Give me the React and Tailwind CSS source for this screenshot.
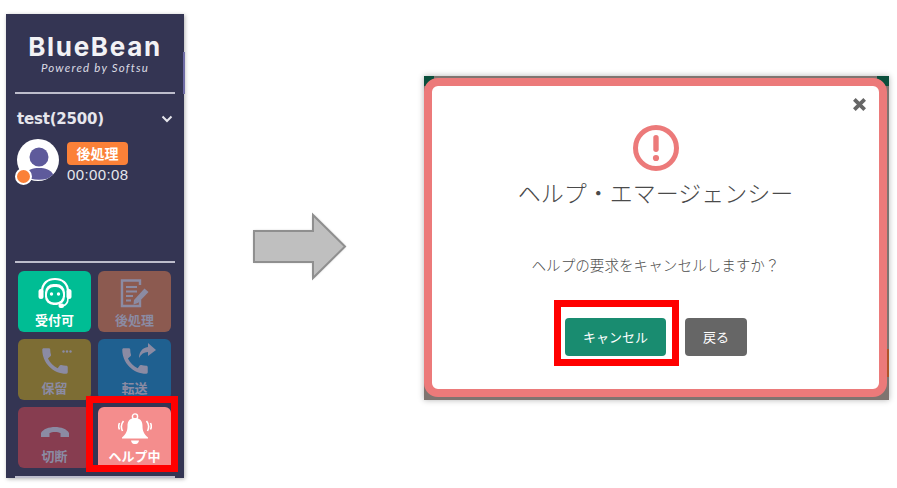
import React from "react";
import { MdCall } from "react-icons/md";

const jp = "font-['Noto_Sans_CJK_JP','Noto_Sans',sans-serif]";

function HeadsetIcon() {
  return (
    <svg width="36" height="32" viewBox="0 0 36 32" fill="none">
      <path d="M5 15 C5 6 11 2 18 2 C25 2 31 6 31 15" stroke="white" strokeWidth="2.2" />
      <rect x="1.5" y="12" width="5" height="10" rx="2.5" fill="white" />
      <rect x="29.5" y="12" width="5" height="10" rx="2.5" fill="white" />
      <rect x="8" y="7" width="20" height="21" rx="8.5" fill="white" />
      <rect x="10" y="10" width="16" height="15.5" rx="7" fill="#00bd94" />
      <circle cx="14.5" cy="17" r="1.7" fill="white" />
      <circle cx="21.5" cy="17" r="1.7" fill="white" />
      <path d="M31 21 C31 26 29 28.5 25 29" stroke="white" strokeWidth="1.6" />
      <rect x="21.5" y="26.5" width="5.5" height="4.5" rx="2" fill="white" />
    </svg>
  );
}

function MemoIcon() {
  return (
    <svg width="30" height="29" viewBox="0 0 30 29" fill="none" stroke="#8b8ba3">
      <path d="M20 6 V1.5 H2 V27 H20 V21" strokeWidth="2.4" />
      <path d="M6 8 H17 M6 12.5 H17 M6 17 H13 M6 21.5 H11" strokeWidth="2" />
      <path d="M14 21 L24.5 9.5 L28.5 13 L18 24 L13.5 25.5 Z" fill="#8b8ba3" stroke="none" />
    </svg>
  );
}

function HangUpIcon() {
  return (
    <svg width="30" height="14" viewBox="0 0 30 14" className="mt-[4px]">
      <path d="M1 9 C5 1 25 1 29 9 V13 H20.5 V9 C18 7.5 12 7.5 9.5 9 V13 H1 Z" fill="#8b8ba3" />
    </svg>
  );
}

function BellIcon() {
  return (
    <svg width="34" height="32" viewBox="0 0 34 32" fill="none">
      <circle cx="17" cy="3.5" r="2.6" stroke="white" strokeWidth="1.4" />
      <path d="M17 5 C23 5 24.5 9 24.5 13 C24.5 18 26 21 30 24.5 V25.5 H4 V24.5 C8 21 9.5 18 9.5 13 C9.5 9 11 5 17 5 Z" fill="white" />
      <path d="M13 27.5 H21 C20.5 30.5 18.5 31 17 31 C15.5 31 13.5 30.5 13 27.5 Z" fill="white" />
      <path d="M5.5 8 C3 11 3 15 4.5 18 M1.5 10 C0.5 12 0.5 14.5 1.5 16.5" stroke="white" strokeWidth="1.6" />
      <path d="M28.5 8 C31 11 31 15 29.5 18 M32.5 10 C33.5 12 33.5 14.5 32.5 16.5" stroke="white" strokeWidth="1.6" />
    </svg>
  );
}

function ActionButton({ bg, label, bright, icon, clipped }) {
  return (
    <div
      className={`${bg} ${clipped ? "rounded-t-[6px]" : "rounded-[6px]"} h-[61px] flex flex-col items-center overflow-hidden`}
    >
      <div className="h-[36px] mt-[4px] mb-[1px] flex items-center justify-center">{icon}</div>
      <span
        className={`${jp} text-[13px] leading-[16px] font-bold ${bright ? "text-white" : "text-[#8b8ba3]"}`}
      >
        {label}
      </span>
    </div>
  );
}

function Sidebar() {
  return (
    <aside className="relative ml-[6px] mt-[14px] w-[178px] h-[464px] bg-[#343553] shadow-[1px_1px_4px_rgba(0,0,0,0.3)] shrink-0">
      <div className="absolute right-[-1px] top-[38px] w-[2px] h-[42px] bg-[#6f6ca6]" />
      <div className="h-[80px] flex flex-col items-center pt-[20px] border-b-2 border-[#bdbdcc] mx-[9px]">
        <span className="font-['Inter',sans-serif] text-[26px] leading-[26px] font-bold tracking-[1.7px] text-[#f2f2f5]">
          BlueBean
        </span>
        <span className="font-['Lato',sans-serif] italic text-[11.5px] leading-[13px] tracking-[1.2px] text-[#dcdce4] mt-[1px]">
          Powered by Softsu
        </span>
      </div>

      <div className="flex items-center justify-between px-[11px] mt-[15px]">
        <span className="font-['DejaVu_Sans',sans-serif] font-bold text-[15px] leading-[20px] text-[#e6e6ec] tracking-[-0.2px]">
          test(2500)
        </span>
        <svg width="12" height="8" viewBox="0 0 12 8" fill="none">
          <path d="M1.5 1.5 L6 6 L10.5 1.5" stroke="#e6e6ec" strokeWidth="2" />
        </svg>
      </div>

      <div className="flex pl-[11px] mt-[10px] h-[122px]">
        <div className="relative w-[42px] h-[42px] rounded-full bg-white overflow-visible">
          <svg width="42" height="42" viewBox="0 0 42 42" className="rounded-full">
            <circle cx="22" cy="18" r="9.5" fill="#5e5a9b" />
            <path d="M7 37 C10 30 16 29 22 29 C28 29 34 30 37 37 C30 42 14 42 7 37 Z" fill="#5e5a9b" />
          </svg>
          <div className="absolute left-[-2px] bottom-[-4px] w-[17px] h-[17px] rounded-full bg-[#fb8138] border-2 border-white" />
        </div>
        <div className="ml-[8px] mt-[3px] flex flex-col">
          <span className={`${jp} w-[61px] h-[23px] rounded-[4px] bg-[#fb8138] text-white text-[14px] leading-[23px] font-bold text-center`}>
            後処理
          </span>
          <span className="font-['Liberation_Sans',sans-serif] text-[15px] leading-[18px] text-[#e6e6ec] mt-[1px] tracking-[0.4px]">
            00:00:08
          </span>
        </div>
      </div>

      <div className="border-t-2 border-[#bdbdcc] mx-[9px] pt-[8px]">
        <div className="grid grid-cols-[73px_73px] gap-[7px] ml-[3px]">
          <ActionButton bg="bg-[#00bd94]" label="受付可" bright icon={<HeadsetIcon />} />
          <ActionButton bg="bg-[#8c5a50]" label="後処理" icon={<MemoIcon />} />
          <ActionButton
            bg="bg-[#7d6d34]"
            label="保留"
            icon={
              <span className="relative text-[#8b8ba3]">
                <MdCall size={34} />
                <svg className="absolute right-[0px] top-[6px]" width="10" height="3" viewBox="0 0 10 3">
                  <circle cx="1.5" cy="1.5" r="1.2" fill="#8b8ba3" />
                  <circle cx="5" cy="1.5" r="1.2" fill="#8b8ba3" />
                  <circle cx="8.5" cy="1.5" r="1.2" fill="#8b8ba3" />
                </svg>
              </span>
            }
          />
          <ActionButton
            bg="bg-[#1f6090]"
            label="転送"
            icon={
              <span className="relative text-[#8b8ba3]">
                <MdCall size={34} />
                <svg className="absolute right-[-4px] top-[-1px]" width="18" height="16" viewBox="0 0 18 16">
                  <path d="M10 0 L18 7 L10 13 V9 C6 9 3 11 1 15 C1 9 4 5 10 4 Z" fill="#8b8ba3" />
                </svg>
              </span>
            }
          />
          <ActionButton bg="bg-[#873d50]" label="切断" icon={<HangUpIcon />} />
          <ActionButton bg="bg-[#f48d8d]" label="ヘルプ中" bright clipped icon={<BellIcon />} />
        </div>
        <div className="border-t-2 border-[#bdbdcc] mt-[8px]" />
      </div>

      {/* red highlight around the help button */}
      <div className="absolute left-[80px] top-[382px] w-[92px] h-[76px] border-[7px] border-[#ff0000]" />
    </aside>
  );
}

function Arrow() {
  return (
    <svg width="100" height="74" viewBox="0 0 100 74" className="ml-[65px] mt-[209px] shrink-0" fill="none">
      <defs>
        <filter id="soft" x="-10%" y="-10%" width="120%" height="120%">
          <feGaussianBlur stdDeviation="1.6" />
        </filter>
      </defs>
      <path d="M5 22 H64 V6 L96 37.5 L64 69 V53 H5 Z" fill="#000" opacity="0.3" filter="url(#soft)" />
      <path d="M5 22 H64 V6 L96 37.5 L64 69 V53 H5 Z" fill="#bfbfbf" stroke="#8f8f8f" strokeWidth="2" />
    </svg>
  );
}

function HelpDialog() {
  return (
    <div className="relative ml-[75px] mt-[76px] w-[465px] h-[324px] pt-[2px] bg-[#7f7470] shadow-[0_0_6px_rgba(0,0,0,0.3)] shrink-0">
      <div className="absolute left-0 top-0 w-[10px] h-[10px] bg-[#0b4f3c]" />
      <div className="absolute right-0 top-0 w-[12px] h-[10px] bg-[#0b4f3c]" />
      <div className="absolute right-0 top-[273px] w-[2px] h-[28px] bg-[#b0552a]" />
      <div className="relative w-[463px] h-[319px] border-[8px] border-[#ec7a7a] rounded-[14px] bg-white flex flex-col items-center">
        <svg className="absolute right-[12px] top-[11px]" width="15" height="15" viewBox="0 0 16 16">
          <path d="M2.5 2.5 L13.5 13.5 M13.5 2.5 L2.5 13.5" stroke="#666666" strokeWidth="4" />
        </svg>

        <svg width="46" height="46" viewBox="0 0 46 46" className="mt-[39px]" fill="none">
          <circle cx="23" cy="23" r="20.5" stroke="#ec7a7a" strokeWidth="5" />
          <rect x="20.3" y="10" width="5.4" height="17" rx="2.7" fill="#ec7a7a" />
          <circle cx="23" cy="33" r="3.1" fill="#ec7a7a" />
        </svg>

        <h2 className={`${jp} font-light text-[23px] leading-[30px] text-[#4a4a4a] mt-[6px] whitespace-nowrap`}>
          ヘルプ・エマージェンシー
        </h2>

        <p className={`${jp} font-light text-[14.6px] leading-[20px] text-[#4d4d4d] mt-[48px] whitespace-nowrap`}>
          ヘルプの要求をキャンセルしますか？
        </p>

        <div className="relative flex items-center gap-[19px] mt-[43px] ml-[1px]">
          <button className={`${jp} w-[101px] h-[38px] rounded-[4px] bg-[#198c70] text-white text-[13px]`}>
            キャンセル
          </button>
          <button className={`${jp} w-[62px] h-[38px] rounded-[4px] bg-[#666666] text-white text-[13px]`}>
            戻る
          </button>
          <div className="absolute left-[-11px] top-[-18px] w-[125px] h-[66px] border-[7px] border-[#ff0000]" />
        </div>
      </div>
    </div>
  );
}

export default function App() {
  return (
    <div className="w-[897px] h-[488px] bg-white flex items-start overflow-hidden">
      <Sidebar />
      <Arrow />
      <HelpDialog />
    </div>
  );
}
